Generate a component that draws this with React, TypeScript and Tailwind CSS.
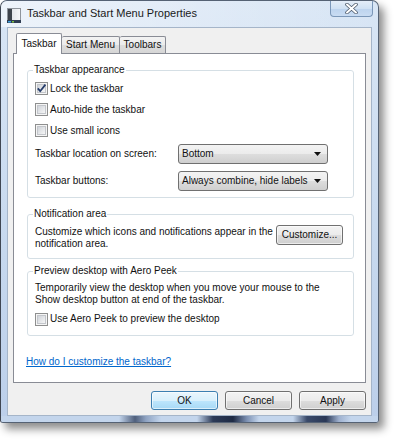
import React from 'react';

const Checkbox: React.FC<{ checked?: boolean }> = ({ checked }) => (
  <svg width="13" height="13" viewBox="0 0 13 13" className="shrink-0">
    <defs>
      <linearGradient id="cbfill" x1="0" y1="0" x2="1" y2="1">
        <stop offset="0" stopColor="#cdd1d7" />
        <stop offset="1" stopColor="#f8f8f8" />
      </linearGradient>
    </defs>
    <rect x="0.5" y="0.5" width="12" height="12" fill="#f5f5f5" stroke="#8e8f8f" />
    <rect x="2.5" y="2.5" width="8" height="8" fill="url(#cbfill)" stroke="#c3c6cb" />
    {checked && (
      <path d="M2.8 6.4 L5.2 9.2 L10.4 2.6" fill="none" stroke="#263d6b" strokeWidth="1.8" />
    )}
  </svg>
);

const Arrow = () => (
  <svg width="7" height="4" viewBox="0 0 7 4" className="shrink-0">
    <path d="M0 0 H7 L3.5 4 Z" fill="#111" />
  </svg>
);

const Dropdown: React.FC<{ value: string }> = ({ value }) => (
  <div className="flex h-[20px] w-[150px] items-center justify-between rounded-[3px] border border-[#707070] bg-[linear-gradient(to_bottom,#f3f3f3_0%,#ebebeb_50%,#dddddd_51%,#cfcfcf_100%)] pl-[3px] pr-[6px]">
    <span>{value}</span>
    <Arrow />
  </div>
);

const Button: React.FC<{ label: string; primary?: boolean; className?: string }> = ({ label, primary, className }) => (
  <div
    className={
      primary
        ? `flex h-[19px] items-center justify-center rounded-[3px] border border-[#3c7fb1] bg-[linear-gradient(to_bottom,#eaf6fd_0%,#d9f0fc_50%,#bee6fd_51%,#a7d9f5_100%)] shadow-[inset_0_0_0_1px_rgba(255,255,255,0.6)] ${className ?? ''}`
        : `flex h-[19px] items-center justify-center rounded-[3px] border border-[#707070] bg-[linear-gradient(to_bottom,#f3f3f3_0%,#ebebeb_50%,#dddddd_51%,#cfcfcf_100%)] shadow-[inset_0_0_0_1px_rgba(255,255,255,0.6)] ${className ?? ''}`
    }
  >
    {label}
  </div>
);

const Group: React.FC<{ title: string; className?: string; children: React.ReactNode }> = ({ title, className, children }) => (
  <fieldset className={`ml-[13px] w-[327px] rounded-[3px] border border-[#d5dfe5] px-[7px] ${className ?? ''}`}>
    <legend className="-ml-[2px] px-[1px] leading-[12px]">{title}</legend>
    {children}
  </fieldset>
);

const TitleIcon = () => (
  <svg width="14" height="15" viewBox="0 0 14 15" className="shrink-0">
    <defs>
      <linearGradient id="tiPage" x1="0" y1="0" x2="1" y2="0">
        <stop offset="0" stopColor="#d9dde2" />
        <stop offset="1" stopColor="#f7f8fa" />
      </linearGradient>
    </defs>
    <rect x="0.5" y="0.5" width="13" height="12" fill="url(#tiPage)" stroke="#8f959c" />
    <rect x="1" y="1" width="4" height="11" fill="#3d434b" />
    <rect x="0" y="12" width="14" height="3" fill="#2f3d52" />
    <rect x="1" y="13" width="3" height="1.5" fill="#3fa2e0" />
    <rect x="5" y="13" width="2" height="1.5" fill="#7cc144" />
  </svg>
);

const CloseGlyph = () => (
  <svg width="13" height="11" viewBox="0 0 13 11">
    <path d="M2 1.5 L11 9.5 M11 1.5 L2 9.5" stroke="#4d5a6b" strokeWidth="3.6" strokeLinecap="round" />
    <path d="M2 1.5 L11 9.5 M11 1.5 L2 9.5" stroke="#ffffff" strokeWidth="2" strokeLinecap="round" />
  </svg>
);

export default function App() {
  return (
    <div className="h-[440px] w-[396px] overflow-hidden bg-white font-['Liberation_Sans',Arial,sans-serif] text-[10px] leading-[12px] text-[#111]">
      <div className="flex h-[423px] w-[379px] flex-col overflow-hidden rounded-t-[7px] rounded-b-[3px] border border-[#556274] border-l-[#3f4652] bg-[linear-gradient(to_bottom,#d9e6f5_0%,#c6d8ee_60%,#bccfea_100%)] shadow-[5px_6px_8px_rgba(0,0,0,0.45)]">
        {/* title bar */}
        <div className="flex h-[26px] shrink-0 items-start bg-[linear-gradient(to_right,rgba(255,255,255,0.55)_0%,rgba(255,255,255,0.2)_55%,rgba(255,255,255,0)_100%)]">
          <div className="flex items-start gap-[6px] pl-[6px] pt-[5px]">
            <div className="mt-[2px]">
              <TitleIcon />
            </div>
            <span className="text-[11px] leading-[14px] text-[#1a1a1a]">Taskbar and Start Menu Properties</span>
          </div>
          <div className="ml-auto mr-[5px] flex h-[16px] w-[43px] items-center justify-center rounded-b-[4px] border border-t-0 border-[#7b97b8] bg-[linear-gradient(to_bottom,#e3edf8_0%,#d0e1f3_50%,#bcd3ee_51%,#c9dcf2_100%)]">
            <CloseGlyph />
          </div>
        </div>

        {/* client area */}
        <div className="ml-[6px] flex h-[389px] w-[365px] shrink-0 flex-col border border-[#a5b5c9] bg-[#f0f0f0] px-[5px]">
          {/* tabs */}
          <div className="flex h-[25px] shrink-0 items-end pl-[3px]">
            <div className="relative z-10 -mb-px flex h-[21px] w-[46px] items-center justify-center rounded-t-[2px] border border-b-0 border-[#898c95] bg-white pb-[1px]">
              Taskbar
            </div>
            <div className="flex h-[17px] w-[58px] items-center justify-center rounded-t-[2px] border border-b-0 border-l-0 border-[#898c95] bg-[linear-gradient(to_bottom,#f3f3f3_0%,#ebebeb_50%,#dddddd_51%,#d6d6d6_100%)]">
              Start Menu
            </div>
            <div className="flex h-[17px] w-[46px] items-center justify-center rounded-t-[2px] border border-b-0 border-l-0 border-[#898c95] bg-[linear-gradient(to_bottom,#f3f3f3_0%,#ebebeb_50%,#dddddd_51%,#d6d6d6_100%)]">
              Toolbars
            </div>
          </div>

          {/* tab panel */}
          <div className="flex h-[330px] w-[353px] shrink-0 flex-col border border-[#898c95] bg-white">
            <Group title="Taskbar appearance" className="mt-[10px] pb-[6px] pt-[2px]">
              <div className="flex h-[21px] items-center gap-[2px]">
                <Checkbox checked />
                <span>Lock the taskbar</span>
              </div>
              <div className="flex h-[21px] items-center gap-[2px]">
                <Checkbox />
                <span>Auto-hide the taskbar</span>
              </div>
              <div className="flex h-[21px] items-center gap-[2px]">
                <Checkbox />
                <span>Use small icons</span>
              </div>
              <div className="mt-[3px] flex items-center">
                <span className="w-[143px]">Taskbar location on screen:</span>
                <Dropdown value="Bottom" />
              </div>
              <div className="mt-[7px] flex items-center">
                <span className="w-[143px]">Taskbar buttons:</span>
                <Dropdown value="Always combine, hide labels" />
              </div>
            </Group>

            <Group title="Notification area" className="mt-[10px] pb-[8px] pt-[5px]">
              <div className="flex items-start">
                <p className="mt-[1px] w-[241px]">
                  Customize which icons and notifications appear in the notification area.
                </p>
                <Button label="Customize..." className="h-[20px] w-[67px]" />
              </div>
            </Group>

            <Group title="Preview desktop with Aero Peek" className="mt-[6px] pb-[9px] pt-[5px]">
              <p className="w-[300px]">
                Temporarily view the desktop when you move your mouse to the Show desktop button at end of the taskbar.
              </p>
              <div className="mt-[6px] flex h-[14px] items-center gap-[2px]">
                <Checkbox />
                <span>Use Aero Peek to preview the desktop</span>
              </div>
            </Group>

            <a className="ml-[12px] mt-[20px] self-start text-[#0066cc] underline">How do I customize the taskbar?</a>
          </div>

          {/* dialog buttons */}
          <div className="mt-[8px] flex justify-end gap-[7px]">
            <Button label="OK" primary className="w-[67px]" />
            <Button label="Cancel" className="w-[67px]" />
            <Button label="Apply" className="w-[67px]" />
          </div>
        </div>

        {/* bottom frame */}
        <div className="flex-1 bg-[linear-gradient(to_right,#c3d5ec_0px,#c3d5ec_118px,#4f5f7c_134px,#8fa3c2_145px,#c3d5ec_160px,#c3d5ec_196px,#2c3a57_212px,#1f2b45_232px,#7d91b3_246px,#c3d5ec_258px,#c3d5ec_292px,#3a4a6a_306px,#2a3856_325px,#9fb1cf_338px,#c3d5ec_350px)]" />
      </div>
    </div>
  );
}
